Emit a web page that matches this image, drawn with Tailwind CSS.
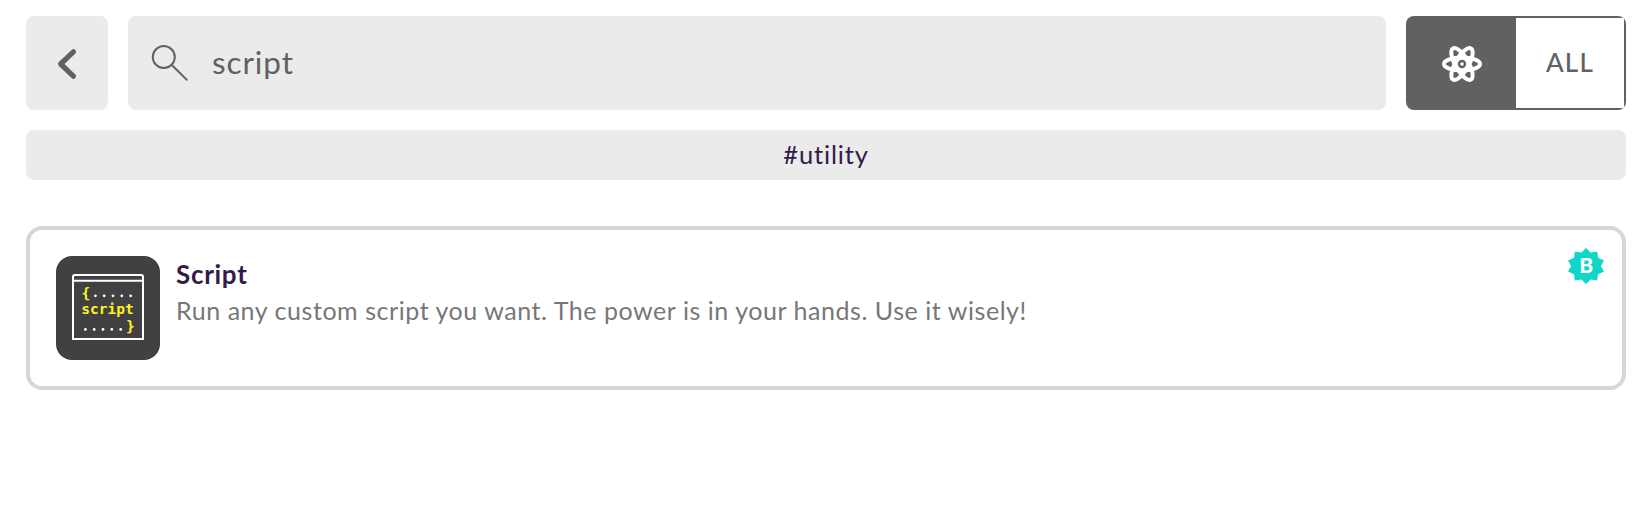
<!DOCTYPE html>
<html lang="en">
<head>
<meta charset="utf-8">
<title>Script</title>
<script src="https://cdn.jsdelivr.net/npm/@tailwindcss/browser@4"></script>
</head>
<body class="bg-white font-['Lato',sans-serif]">
<main class="pt-4 pl-[26px] pr-[18px] h-[526px]">
  <div class="flex gap-5 h-[94px]">
    <button class="w-[82px] rounded-lg bg-[#ebebeb]" aria-label="Back">
      <svg class="block" width="82" height="94" fill="none" stroke="#616161" stroke-width="5.2" stroke-linecap="round" stroke-linejoin="round"><path d="M47.4 35.8 34.6 48l12.8 12.2"/></svg>
    </button>
    <div class="flex-1 flex items-center rounded-lg bg-[#ebebeb]">
      <svg class="block shrink-0" width="84" height="94" fill="none" stroke="#616161" stroke-width="2"><circle cx="35.8" cy="41" r="11"/><path d="m43.8 49 15.6 15.4"/></svg>
      <span class="text-[31.5px] leading-[36px] pb-0.5 tracking-[0.9px] text-[#616161] whitespace-nowrap">script</span>
    </div>
    <div class="flex w-[220px] rounded-lg overflow-hidden bg-[#616161]">
      <div class="w-[110px]">
        <svg class="block" width="110" height="94">
          <g transform="translate(56 48)" fill="none" stroke="#fff" stroke-width="4">
            <ellipse rx="18" ry="6.6"/><ellipse rx="18" ry="6.6" transform="rotate(60)"/><ellipse rx="18" ry="6.6" transform="rotate(120)"/>
            <circle r="6" fill="#fff" stroke="none"/>
            <circle r="3" stroke="#616161" stroke-width="2.4"/>
          </g>
        </svg>
      </div>
      <div class="w-[108px] my-0.5 bg-white flex items-center justify-center text-[26px] leading-[30px] pb-0.5 tracking-[1.2px] text-[#616161] font-medium">ALL</div>
    </div>
  </div>
  <div class="mt-5 h-[50px] rounded-lg bg-[#ebebeb] flex items-center justify-center text-[25.5px] leading-[30px] pb-0.5 tracking-[0.85px] text-[#341b49]">#utility</div>
  <article class="mt-[46px] h-[164px] rounded-2xl border-4 border-[#d7d7d7] flex pl-[26px] pt-[26px] pr-[18px]">
    <svg class="shrink-0" width="104" height="104">
      <rect width="104" height="104" rx="16" fill="#414042"/>
      <path d="M17 83V21q0-2 2-2h66q2 0 2 2v62zM17 24.7h70" fill="none" stroke="#fff" stroke-width="2"/>
      <g font-family="DejaVu Sans Mono, monospace" font-size="14.5" font-weight="700" fill="#fff21f">
        <text x="25.5" y="41.5">{</text><text x="25.3" y="58">script</text><text x="70" y="75">}</text>
      </g>
      <g fill="#fff"><circle cx="39.4" cy="39.8" r="1.4"/><circle cx="48.2" cy="39.8" r="1.4"/><circle cx="57" cy="39.8" r="1.4"/><circle cx="65.8" cy="39.8" r="1.4"/><circle cx="74.7" cy="39.8" r="1.4"/><circle cx="29.4" cy="73.4" r="1.4"/><circle cx="38.2" cy="73.4" r="1.4"/><circle cx="47" cy="73.4" r="1.4"/><circle cx="55.8" cy="73.4" r="1.4"/><circle cx="64.7" cy="73.4" r="1.4"/></g>
    </svg>
    <div class="flex-1 pl-4">
      <h2 class="text-[26px] leading-[36px] font-bold tracking-[0.7px] text-[#341b49]">Script</h2>
      <p class="text-[25px] leading-[36px] tracking-[0.55px] text-[#777] whitespace-nowrap">Run any custom script you want. The power is in your hands. Use it wisely!</p>
    </div>
    <svg class="shrink-0 -mt-2" width="36" height="36" viewBox="-18 -18 36 36">
      <path transform="scale(1.05 1)" fill="#0fd6c8" d="M0-18 4.4-13.5 10.6-14.6 11.5-8.35 17.1-5.6 14.2 0 17.1 5.6 11.5 8.35 10.6 14.6 4.4 13.5 0 18-4.4 13.5-10.6 14.6-11.5 8.35-17.1 5.6-14.2 0-17.1-5.6-11.5-8.35-10.6-14.6-4.4-13.5z"/>
      <text x="0.3" y="7.2" text-anchor="middle" font-family="Lato, sans-serif" font-weight="900" font-size="21" fill="#fff">B</text>
    </svg>
  </article>
</main>
</body>
</html>
